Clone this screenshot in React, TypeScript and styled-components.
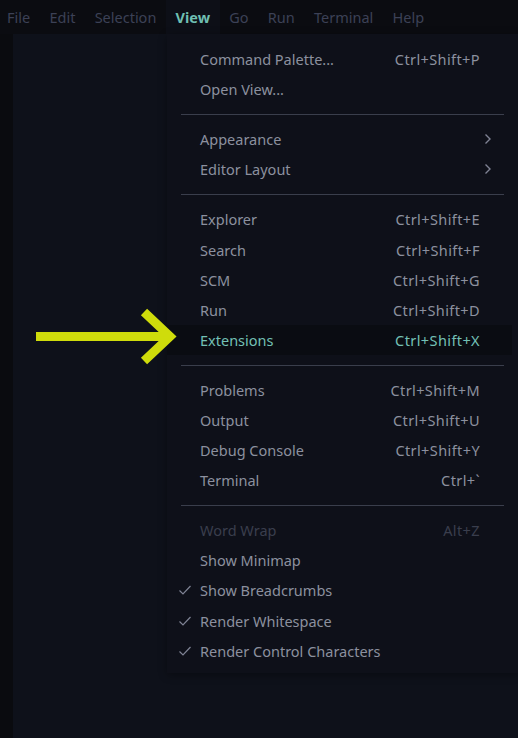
import React from "react";
import styled, { createGlobalStyle } from "styled-components";

const Global = createGlobalStyle`
  html, body { margin: 0; padding: 0; background: #0e111a; }
  body { font-family: "Noto Sans", "Open Sans", sans-serif; }
  #root { width: 518px; height: 738px; overflow: hidden; }
`;

const Page = styled.div`
  width: 518px;
  height: 738px;
  display: flex;
  flex-direction: column;
  background: #0e111a;
  position: relative;
  overflow: hidden;
`;

const MenuBar = styled.div`
  height: 34px;
  flex: none;
  display: flex;
  align-items: center;
  background: #0b0c11;
  padding-left: 0;
  margin-left: -2.5px;
`;

const MenuTitle = styled.div<{ $active?: boolean }>`
  font-size: 14.5px;
  padding: 0 9.6px;
  height: 34px;
  line-height: 34px;
  color: ${(p) => (p.$active ? "#6fbfb2" : "#3c4156")};
  font-weight: ${(p) => (p.$active ? 700 : 400)};
  background: ${(p) => (p.$active ? "#0d0f17" : "transparent")};
`;

const Body = styled.div`
  flex: 1;
  display: flex;
`;

const Gutter = styled.div`
  width: 13px;
  background: #0a0b0f;
`;

const Editor = styled.div`
  flex: 1;
  background: #0e111a;
  position: relative;
`;

const Dropdown = styled.div`
  position: absolute;
  left: 154px;
  top: 0;
  width: 351px;
  padding: 10px 0 7px;
  background: #0e1019;
  box-shadow: 0 2px 8px rgba(0, 0, 0, 0.35);
`;

const Item = styled.div<{ $active?: boolean; $disabled?: boolean }>`
  height: 30.1px;
  margin-right: 6px;
  display: flex;
  align-items: center;
  font-size: 14.5px;
  color: ${(p) => (p.$active ? "#73c0b5" : p.$disabled ? "#3a3e4d" : "#8c909f")};
  background: ${(p) => (p.$active ? "#0a0c12" : "transparent")};
`;

const Check = styled.span`
  width: 31px;
  flex: none;
  display: flex;
  justify-content: center;
  padding-left: 2px;
  color: #7f8394;
`;

const Label = styled.span`
  flex: 1;
  white-space: nowrap;
`;

const Keys = styled.span`
  padding-right: 32px;
  letter-spacing: 0.4px;
  white-space: nowrap;
`;

const Chevron = styled.span`
  width: 10px;
  padding-right: 19px;
  display: flex;
  justify-content: center;
  color: #7f8394;
`;

const Sep = styled.div`
  height: 1px;
  margin: 10px 14px 9px 14px;
  background: #3a3e4c;
`;

const ArrowSvg = styled.svg`
  position: absolute;
  left: 23px;
  top: 273px;
`;

type Row =
  | { sep: true }
  | { label: string; keys?: string; sub?: boolean; check?: boolean; active?: boolean; disabled?: boolean };

const rows: Row[] = [
  { label: "Command Palette...", keys: "Ctrl+Shift+P" },
  { label: "Open View..." },
  { sep: true },
  { label: "Appearance", sub: true },
  { label: "Editor Layout", sub: true },
  { sep: true },
  { label: "Explorer", keys: "Ctrl+Shift+E" },
  { label: "Search", keys: "Ctrl+Shift+F" },
  { label: "SCM", keys: "Ctrl+Shift+G" },
  { label: "Run", keys: "Ctrl+Shift+D" },
  { label: "Extensions", keys: "Ctrl+Shift+X", active: true },
  { sep: true },
  { label: "Problems", keys: "Ctrl+Shift+M" },
  { label: "Output", keys: "Ctrl+Shift+U" },
  { label: "Debug Console", keys: "Ctrl+Shift+Y" },
  { label: "Terminal", keys: "Ctrl+`" },
  { sep: true },
  { label: "Word Wrap", keys: "Alt+Z", disabled: true },
  { label: "Show Minimap" },
  { label: "Show Breadcrumbs", check: true },
  { label: "Render Whitespace", check: true },
  { label: "Render Control Characters", check: true },
];

const CheckIcon = () => (
  <svg width="14" height="14" viewBox="0 0 14 14" fill="none" stroke="currentColor" strokeWidth="1.2">
    <path d="M1.5 7.5 L5 11 L12.5 3" />
  </svg>
);

const ChevronIcon = () => (
  <svg width="8" height="14" viewBox="0 0 8 14" fill="none" stroke="currentColor" strokeWidth="1.4">
    <path d="M1.5 2.5 L6 7 L1.5 11.5" />
  </svg>
);

export default function App() {
  const titles = ["File", "Edit", "Selection", "View", "Go", "Run", "Terminal", "Help"];
  return (
    <>
      <Global />
      <Page>
        <MenuBar>
          {titles.map((t) => (
            <MenuTitle key={t} $active={t === "View"}>
              {t}
            </MenuTitle>
          ))}
        </MenuBar>
        <Body>
          <Gutter />
          <Editor>
            <Dropdown>
              {rows.map((r, i) =>
                "sep" in r ? (
                  <Sep key={i} />
                ) : (
                  <Item key={i} $active={r.active} $disabled={r.disabled}>
                    <Check>{r.check ? <CheckIcon /> : null}</Check>
                    <Label>{r.label}</Label>
                    {r.keys ? <Keys>{r.keys}</Keys> : null}
                    {r.sub ? (
                      <Chevron>
                        <ChevronIcon />
                      </Chevron>
                    ) : null}
                  </Item>
                )
              )}
            </Dropdown>
            <ArrowSvg width="160" height="60" viewBox="0 0 160 60">
              <path d="M0 29.5 H136" stroke="#cfdc0b" strokeWidth="9" fill="none" />
              <path d="M108 5 L134 29.5 L108 54" stroke="#cfdc0b" strokeWidth="9" fill="none" strokeLinejoin="miter" />
            </ArrowSvg>
          </Editor>
        </Body>
      </Page>
    </>
  );
}
